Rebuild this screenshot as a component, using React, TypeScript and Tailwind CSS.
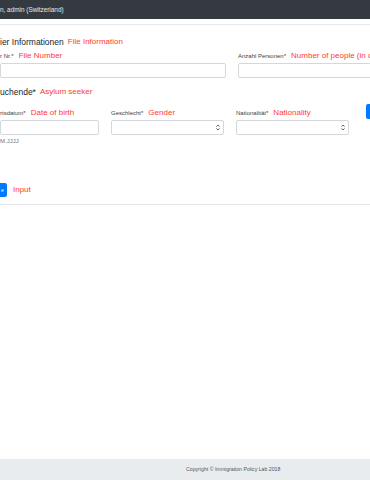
import React from "react";

const red = "text-[#ff3b2f] text-[8px] leading-none";
const label = "text-[6px] leading-none text-[#3a3f44]";

const Arrows = () => (
  <svg width="4" height="7" viewBox="0 0 4 7" className="text-[#555]">
    <path d="M0.5 2.6 L2 1 L3.5 2.6 M0.5 4.4 L2 6 L3.5 4.4" fill="none" stroke="currentColor" strokeWidth="0.9" />
  </svg>
);

const Select = ({ w }: { w: string }) => (
  <div className={`${w} h-[15px] border border-[#d3d8dd] rounded-[2px] bg-white flex items-center justify-end pr-[3px]`}>
    <Arrows />
  </div>
);

const Field = ({ de, en, children }: { de: string; en: string; children: React.ReactNode }) => (
  <div className="flex flex-col">
    <div className="h-[10px] flex items-center gap-[5px] whitespace-nowrap">
      <span className={label}>{de}</span>
      <span className={red}>{en}</span>
    </div>
    <div className="mt-[2px]">{children}</div>
  </div>
);

export default function App() {
  return (
    <div className="w-[370px] h-[480px] flex flex-col bg-white overflow-hidden font-['Liberation_Sans',Arial,sans-serif]">
      <header className="h-[19px] shrink-0 bg-[#343a40] flex items-center text-[6.4px] text-[#e8e8e8] whitespace-nowrap">
        n, admin (Switzerland)
      </header>
      <div className="h-[6px] shrink-0 border-b border-[#e6e8ea]" />

      <main className="flex-1 pt-[11px]">
        <div className="h-[12px] flex items-center gap-[4px] whitespace-nowrap">
          <span className="text-[8.5px] leading-none text-[#212529]">ier Informationen</span>
          <span className={red}>File Information</span>
        </div>

        <div className="mt-[3px] flex gap-[12px]">
          <div className="w-[226px] shrink-0">
            <Field de="r Nr.*" en="File Number">
              <div className="h-[15px] border border-[#d3d8dd] rounded-[2px]" />
            </Field>
          </div>
          <div className="w-[200px] shrink-0">
            <Field de="Anzahl Personen*" en="Number of people (in case)">
              <div className="h-[15px] border border-[#d3d8dd] rounded-[2px]" />
            </Field>
          </div>
        </div>

        <div className="mt-[8px] h-[12px] flex items-center gap-[4px] whitespace-nowrap">
          <span className="text-[8.5px] leading-none text-[#212529]">uchende*</span>
          <span className={red}>Asylum seeker</span>
        </div>

        <div className="mt-[6px] flex gap-[12px] items-start">
          <div className="w-[99px] shrink-0 pt-[4px]">
            <Field de="rtsdatum*" en="Date of birth">
              <div className="h-[15px] border border-[#d3d8dd] rounded-[2px]" />
            </Field>
            <div className="h-[9px] mt-[1px] flex items-center text-[6px] leading-none text-[#6c757d]">M.JJJJ</div>
          </div>
          <div className="w-[113px] shrink-0 pt-[4px]">
            <Field de="Geschlecht*" en="Gender">
              <Select w="w-[113px]" />
            </Field>
          </div>
          <div className="w-[113px] shrink-0 pt-[4px]">
            <Field de="Nationalität*" en="Nationality">
              <Select w="w-[113px]" />
            </Field>
          </div>
          <div className="w-[20px] h-[15px] ml-[5px] shrink-0 bg-[#007bff] rounded-[2px]" />
        </div>

        <div className="mt-[38px] flex items-center gap-[6px]">
          <div className="w-[7px] h-[14px] bg-[#007bff] rounded-r-[2px] flex items-center justify-start pl-[1px]">
            <span className="text-[5px] leading-none text-white">e</span>
          </div>
          <span className={red}>Input</span>
        </div>

        <div className="mt-[7px] border-t border-[#e3e5e8]" />
      </main>

      <footer className="h-[21px] shrink-0 bg-[#e9ecef] flex items-center pl-[186px] text-[5.2px] text-[#50565c] whitespace-nowrap">
        Copyright © Immigration Policy Lab 2018
      </footer>
    </div>
  );
}
